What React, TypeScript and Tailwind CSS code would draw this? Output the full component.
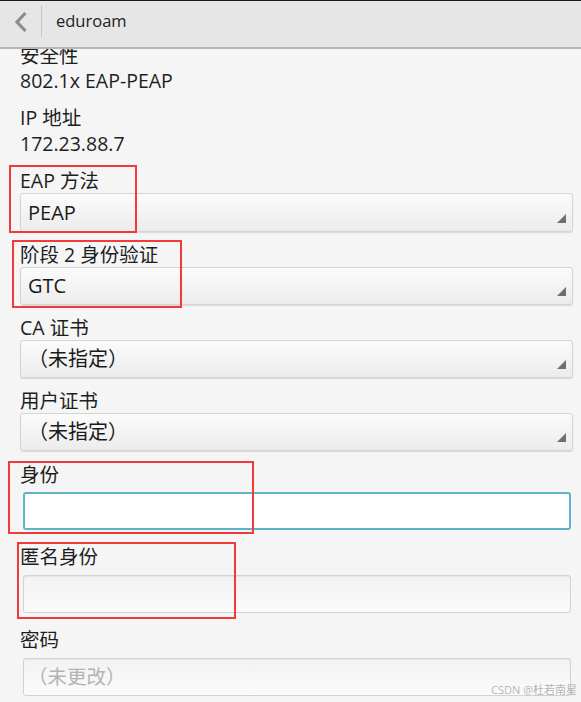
import React from "react";

const FONT = '"Open Sans", "Noto Sans CJK SC", "Noto Sans", sans-serif';

function Label({ text, className = "" }: { text: string; className?: string }) {
  return (
    <div className={`h-[25px] leading-[25px] text-[19.5px] text-[#1e1e1e] pl-[20px] ${className}`}>{text}</div>
  );
}

function Dropdown({ value, tall }: { value: string; tall?: boolean }) {
  return (
    <div
      className={`relative ml-[20px] mr-[8px] ${tall ? "h-[39px]" : "h-[38px]"} rounded-[3px] border border-[#d4d4d4] bg-gradient-to-b from-[#fbfbfb] to-[#ececec] shadow-[0_1px_1px_rgba(0,0,0,0.12)] flex items-center pl-[7px] text-[20px] text-[#1a1a1a] [text-spacing-trim:space-all]`}
    >
      {value}
      <svg className="absolute right-[6px] bottom-[8px]" width="9" height="9" viewBox="0 0 9 9">
        <polygon points="9,0 9,9 0,9" fill="#6f6f6f" />
      </svg>
    </div>
  );
}

function TextInput({ focused, placeholder, className = "" }: { focused?: boolean; placeholder?: string; className?: string }) {
  return (
    <div
      className={`ml-[23px] mr-[10px] h-[38px] rounded-[3px] flex items-center pl-[4px] text-[19.5px] text-[#b3b3b3] ${
        focused
          ? "border-2 border-[#5fb3c6] bg-white"
          : "border border-[#d2d2d2] bg-gradient-to-b from-[#f2f2f2] to-[#fbfbfb] shadow-[inset_0_1px_1px_rgba(0,0,0,0.06)]"
      } ${className}`}
    >
      {placeholder}
    </div>
  );
}

function RedBox({ className }: { className: string }) {
  return <div className={`absolute border-2 border-[#f23a3a] pointer-events-none ${className}`} />;
}

export default function App() {
  return (
    <div className="relative w-[581px] h-[702px] overflow-hidden bg-[#f5f5f5]" style={{ fontFamily: FONT }}>
      {/* Action bar */}
      <div className="relative z-10 h-[49px] border-t border-[#1a1a1a] bg-[#e6e6e6] border-b-2 border-b-[#b8b8b8] flex items-center">
        <div className="w-[41px] h-full flex items-center justify-center">
          <svg width="16" height="22" viewBox="0 0 16 22" className="-mt-[4px] ml-[1px]">
            <polyline points="12.5,2 4,11 12.5,20" fill="none" stroke="#8c8c8c" strokeWidth="3.2" />
          </svg>
        </div>
        <div className="w-px h-[32px] bg-[#c6c6c6] -mt-[6px]" />
        <div className="ml-[14px] text-[16.5px] text-[#222] -mt-[6px]">eduroam</div>
      </div>

      {/* Content */}
      <div className="flex flex-col">
        <Label text="安全性" className="-mt-[6px]" />
        <Label text="802.1x EAP-PEAP" />
        <Label text="IP 地址" className="mt-[12px]" />
        <Label text="172.23.88.7" className="mt-[1px]" />
        <Label text="EAP 方法" className="mt-[12px]" />
        <Dropdown value="PEAP" tall />
        <Label text="阶段 2 身份验证" className="mt-[10px]" />
        <Dropdown value="GTC" />
        <Label text="CA 证书" className="mt-[10px]" />
        <Dropdown value="（未指定）" />
        <Label text="用户证书" className="mt-[10px]" />
        <Dropdown value="（未指定）" />
        <Label text="身份" className="mt-[11px]" />
        <TextInput focused className="mt-[5px]" />
        <Label text="匿名身份" className="mt-[14px]" />
        <TextInput className="mt-[6px]" />
        <Label text="密码" className="mt-[14px]" />
        <TextInput className="mt-[6px]" placeholder="（未更改）" />
      </div>

      {/* Annotation boxes */}
      <RedBox className="left-[9px] top-[165px] w-[128px] h-[68px]" />
      <RedBox className="left-[12px] top-[240px] w-[170px] h-[68px]" />
      <RedBox className="left-[8px] top-[461px] w-[246px] h-[73px]" />
      <RedBox className="left-[17px] top-[542px] w-[219px] h-[77px]" />

      {/* Watermark */}
      <div className="absolute right-[4px] bottom-[4px] text-[11px] text-[#b4b4b4]">CSDN @杜若南星</div>
    </div>
  );
}
